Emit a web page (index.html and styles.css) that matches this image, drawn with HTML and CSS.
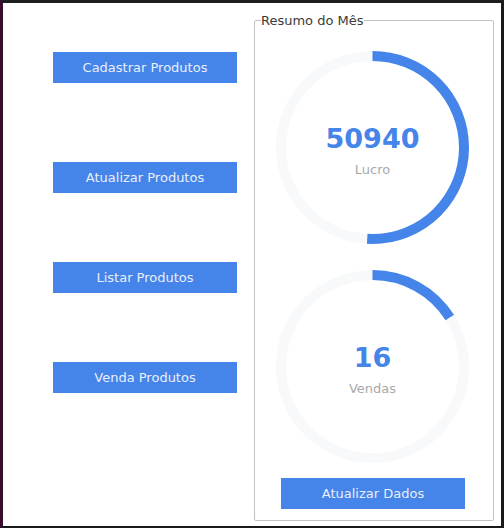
FILE: index.html
```html
<!DOCTYPE html>
<html lang="pt">
<head>
<meta charset="utf-8">
<title>Resumo</title>
<link rel="stylesheet" href="styles.css">
</head>
<body>
<div class="window">
  <div class="actions">
    <button class="btn btn-first">Cadastrar Produtos</button>
    <button class="btn">Atualizar Produtos</button>
    <button class="btn">Listar Produtos</button>
    <button class="btn">Venda Produtos</button>
  </div>
  <fieldset class="summary">
    <legend class="summary-title">Resumo do Mês</legend>
    <div class="ring ring-first">
      <svg class="ring-svg" width="193" height="193" viewBox="0 0 193 193">
        <circle class="track" cx="96.5" cy="96.5" r="91.5"/>
        <circle class="bar" cx="96.5" cy="96.5" r="91.5" pathLength="100" stroke-dasharray="50.94 100" transform="rotate(-90 96.5 96.5)"/>
      </svg>
      <div class="ring-text">
        <div class="ring-value">50940</div>
        <div class="ring-label">Lucro</div>
      </div>
    </div>
    <div class="ring">
      <svg class="ring-svg" width="193" height="193" viewBox="0 0 193 193">
        <circle class="track" cx="96.5" cy="96.5" r="91.5"/>
        <circle class="bar" cx="96.5" cy="96.5" r="91.5" pathLength="100" stroke-dasharray="16 100" transform="rotate(-90 96.5 96.5)"/>
      </svg>
      <div class="ring-text">
        <div class="ring-value">16</div>
        <div class="ring-label">Vendas</div>
      </div>
    </div>
    <button class="btn btn-refresh">Atualizar Dados</button>
  </fieldset>
</div>
</body>
</html>
```

FILE: styles.css
```css
html, body {
  margin: 0;
  padding: 0;
  background: #1c1c1c;
}
body {
  width: 504px;
  height: 528px;
  font-family: "DejaVu Sans", sans-serif;
}
.window {
  box-sizing: border-box;
  width: 504px;
  height: 528px;
  background: #ffffff;
  border-top: 3px solid #1e1e1e;
  border-left: 3px solid #3a0c32;
  border-right: 3px solid #1a1a1a;
  border-bottom: 2px solid #1a1a1a;
  display: flex;
  align-items: flex-start;
}
.actions {
  display: flex;
  flex-direction: column;
  gap: 69px;
  padding-top: 49px;
  margin-left: 50px;
  width: 184px;
}
.btn {
  display: block;
  width: 184px;
  height: 31px;
  border: none;
  margin: 0;
  padding: 0;
  background: #4584e9;
  color: #e9effb;
  font-family: "DejaVu Sans", sans-serif;
  font-size: 13px;
  text-align: center;
}
.btn-first {
  margin-bottom: 10px;
}
.summary {
  box-sizing: border-box;
  width: 240px;
  height: 508px;
  margin: 10px 0 0 17px;
  padding: 23px 0 0 0;
  border: 1px solid #c2c2c2;
  border-radius: 2px;
  display: flex;
  flex-direction: column;
  align-items: flex-start;
}
.summary-title {
  margin-left: 6px;
  padding: 0;
  font-size: 13px;
  line-height: 15px;
  color: #3a3a3a;
}
.ring {
  display: grid;
  width: 193px;
  height: 193px;
  margin-left: 21px;
}
.ring-first {
  margin-bottom: 26px;
}
.ring-svg,
.ring-text {
  grid-area: 1 / 1;
}
.track {
  fill: none;
  stroke: #f8f9fb;
  stroke-width: 10;
}
.bar {
  fill: none;
  stroke: #4584e9;
  stroke-width: 10;
}
.ring-text {
  align-self: center;
  justify-self: center;
  text-align: center;
  padding-top: 6px;
}
.ring-value {
  font-size: 27px;
  line-height: 30px;
  font-weight: bold;
  color: #4584e9;
}
.ring-label {
  margin-top: 8px;
  font-size: 13px;
  line-height: 16px;
  color: #a9a9a9;
}
.btn-refresh {
  margin-top: 15px;
  margin-left: 26px;
}
```
